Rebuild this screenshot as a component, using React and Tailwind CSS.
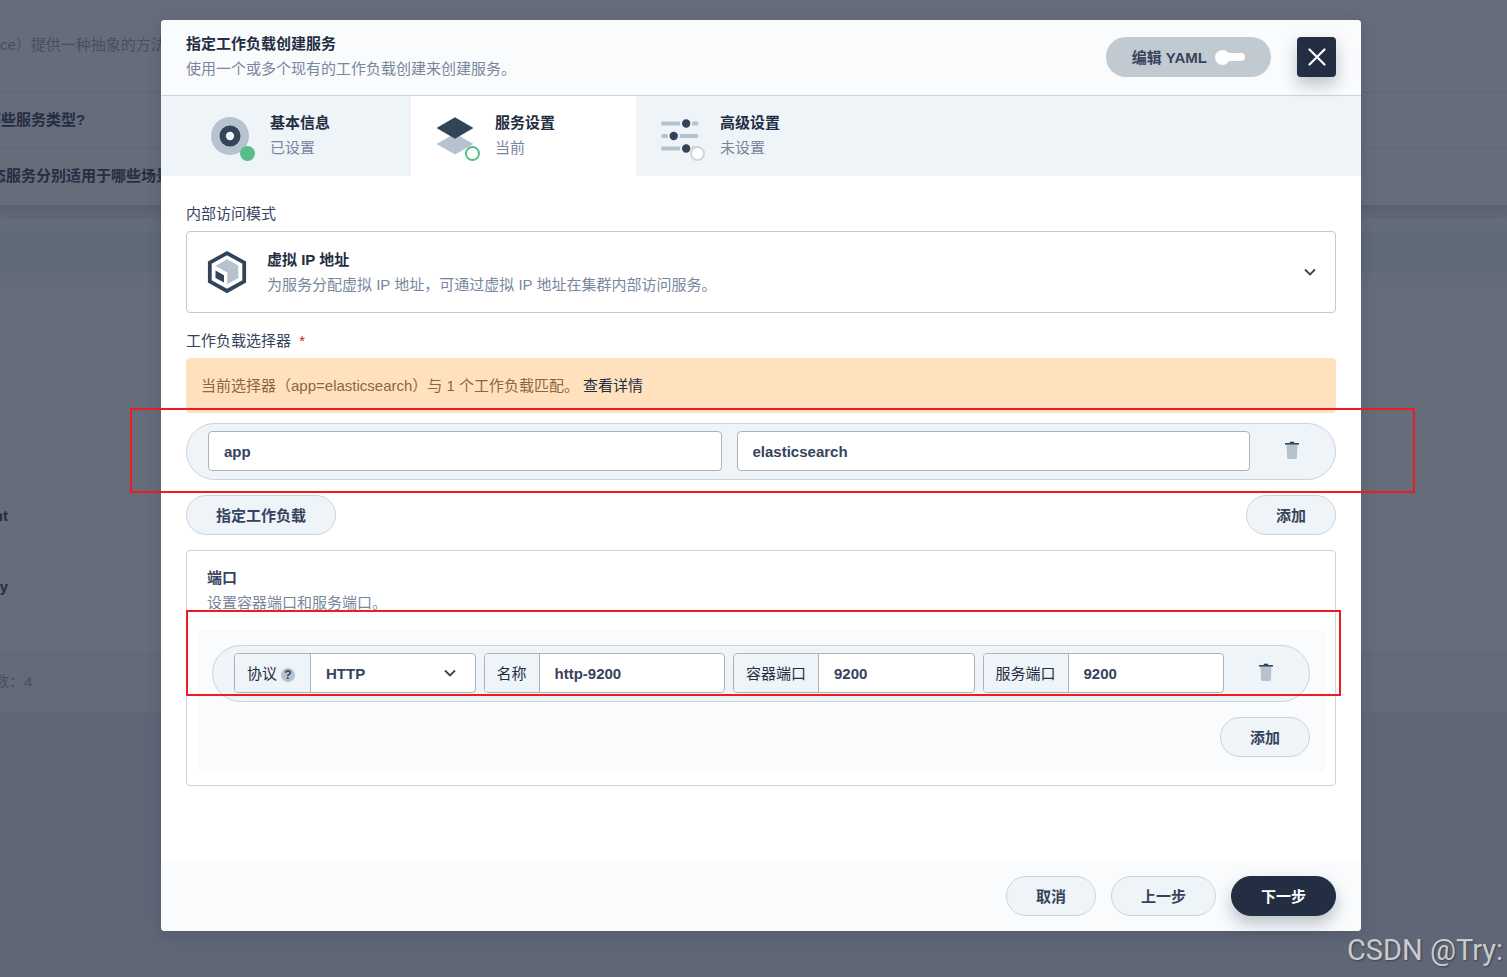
import React, { useState } from "react";

const steps = [
  { id: "basic", title: "基本信息", desc: "已设置", status: "done" },
  { id: "service", title: "服务设置", desc: "当前", status: "current" },
  { id: "advanced", title: "高级设置", desc: "未设置", status: "todo" },
];

const tableRows = ["", "", "", "nt", "y", ""];

const statusClasses = {
  done: "bg-[#55bc8a]",
  current: "bg-white border-2 border-[#55bc8a]",
  todo: "bg-white border-2 border-[#ccd3db]",
};

const StepIcon = ({ id }) => (
  <svg viewBox="0 0 50 50" className="size-[50px]" aria-hidden="true">
    {id === "basic" && (
      <>
        <circle cx="25" cy="25" r="19" fill="#b6c2cd" />
        <circle cx="25" cy="25" r="10.5" fill="#324558" />
        <circle cx="25" cy="25" r="4.2" fill="#eff4f9" />
      </>
    )}
    {id === "service" && (
      <>
        <path d="M25 22.5 43.5 33 25 43.5 6.5 33z" fill="#b6c2cd" />
        <path d="M25 6.3 43.5 17 25 27.7 6.5 17z" fill="#324558" />
      </>
    )}
    {id === "advanced" && (
      <>
        <path
          d="M8 12.5h33.5M8 25h33.5M8 37.5h33.5"
          stroke="#b6c2cd"
          strokeWidth="4"
          strokeLinecap="round"
        />
        <g fill="#324558" stroke="#eff4f9" strokeWidth="2">
          <circle cx="31.2" cy="12.5" r="5.2" />
          <circle cx="18.7" cy="25" r="5.2" />
          <circle cx="31.2" cy="37.5" r="5.2" />
        </g>
      </>
    )}
  </svg>
);

const CubeIcon = () => (
  <svg viewBox="0 0 50 50" className="size-[50px] shrink-0" aria-hidden="true">
    <path
      d="M25 6.2 42.2 15.7V34.5L25 44 7.8 34.5V15.7z"
      fill="none"
      stroke="#324558"
      strokeWidth="3.8"
    />
    <path d="M25 12.3 36.3 18.5V31L25.3 37.3V25.5L13.5 19z" fill="#b6c2cd" />
    <path d="M13.5 23.5 22 28.2V35.5L13.5 31z" fill="#324558" />
  </svg>
);

const Chevron = () => (
  <svg viewBox="0 0 20 20" className="size-5 shrink-0" aria-hidden="true">
    <path d="M5 7.5 10 12.5 15 7.5" fill="none" stroke="#324558" strokeWidth="1.8" />
  </svg>
);

const TrashButton = () => (
  <div className="flex w-[85px] shrink-0 justify-center">
    <button type="button" aria-label="删除" className="p-1">
      <svg viewBox="0 0 20 20" className="size-5" aria-hidden="true">
        <path d="M3.5 3.500h11l-.6 13.200a1.500 1.500 0 0 1-1.500 1.300H5.600a1.500 1.500 0 0 1-1.500-1.300z" fill="#b6c2cd" />
        <path d="M2 2.800h14" stroke="#324558" strokeWidth="1.600" />
        <path d="M6.800 1.400h4.400" stroke="#324558" strokeWidth="1.400" />
      </svg>
    </button>
  </div>
);

const Button = ({ children, dark }) => (
  <button
    type="button"
    className={`h-10 rounded-full border px-[29px] font-bold ${
      dark
        ? "border-[#242e42] bg-[#242e42] text-white shadow-[0_8px_16px_rgba(36,46,66,0.28)]"
        : "border-[#ccd3db] bg-[#eff4f9] text-[#36435c]"
    }`}
  >
    {children}
  </button>
);

const Field = ({ id, label, help, children }) => (
  <div className="flex h-10 min-w-0 overflow-hidden rounded border border-[#abb4be] bg-white focus-within:border-[#55bc8a]">
    <label
      htmlFor={id}
      className="flex shrink-0 items-center gap-1 border-r border-[#abb4be] bg-[#eff4f9] px-3 text-[#242e42]"
    >
      {label}
      {help && (
        <span className="mt-[3px] mr-[3px] flex size-[14px] items-center justify-center rounded-full bg-[#b6c2cd] text-xs font-bold text-[#324558]">
          ?
        </span>
      )}
    </label>
    {children}
  </div>
);

const fieldInput = "w-full min-w-0 px-[15px] font-bold text-[#36435c] outline-none";

// Service list page that sits under the mask
const PageBehind = () => (
  <div
    aria-hidden="true"
    className="min-h-screen overflow-hidden bg-[#5f6777] leading-[25px] whitespace-nowrap"
  >
    <div className="h-[205px] bg-[#666c7a] text-[#242e42] shadow-[0_4px_8px_rgba(36,46,66,0.12)]">
      <p className="h-[92px] pt-8 text-[#464f61]">ce）提供一种抽象的方法</p>
      <p className="-ml-[14px] h-14 border-t border-[#5d6776] pt-[14px] font-bold">哪些服务类型?</p>
      <p className="-ml-[9px] h-14 border-t border-[#5d6776] pt-[14px] font-bold">态服务分别适用于哪些场景</p>
    </div>
    <div className="mt-[14px] bg-[#646b79] pt-[13px]">
      <div className="h-10 bg-[#5f6978]" />
      <div className="mt-3 bg-[#666c7a]">
        {tableRows.map((name, index) => (
          <div
            key={index}
            className={`border-t border-[#5f6a78] pt-[9px] font-bold text-[#242e42] ${
              index === 0 ? "h-[67px]" : index === 5 ? "h-4" : "h-[71px]"
            }`}
          >
            <p className="flex w-2 justify-end">{name}</p>
          </div>
        ))}
      </div>
      <p className="-ml-[6px] h-[60px] bg-[#636a78] pt-[18px] text-[#464f61]">数：4</p>
    </div>
  </div>
);

const App = () => {
  const [yamlMode, setYamlMode] = useState(false);
  const [labelKey, setLabelKey] = useState("app");
  const [labelValue, setLabelValue] = useState("elasticsearch");
  const [port, setPort] = useState({
    protocol: "HTTP",
    name: "http-9200",
    containerPort: "9200",
    servicePort: "9200",
  });

  const updatePort = (key) => (e) => setPort({ ...port, [key]: e.target.value });

  return (
    <div className="relative font-['Liberation_Sans','Noto_Sans_CJK_SC',sans-serif] text-[15px]">
      <PageBehind />

      <div className="absolute inset-0 flex items-start justify-center overflow-hidden pt-5 pl-[15px]">
        <div
          role="dialog"
          aria-labelledby="dialog-title"
          className="w-full max-w-[1200px] rounded bg-white leading-[25px] text-[#36435c] shadow-[0_4px_16px_rgba(36,46,66,0.2)]"
        >
          {/* Header */}
          <header className="flex items-center rounded-t border-b border-[#ccd3db] bg-[#f9fbfd] px-[25px] pt-[11px] pb-6">
            <div className="flex-1 self-start">
              <h1 id="dialog-title" className="h-[25px] font-bold text-[#242e42]">
                指定工作负载创建服务
              </h1>
              <p className="h-[15px] text-[#79879c]">使用一个或多个现有的工作负载创建来创建服务。</p>
            </div>
            <button
              type="button"
              role="switch"
              aria-checked={yamlMode}
              onClick={() => setYamlMode(!yamlMode)}
              className="mt-[6px] -mb-[6px] flex h-10 items-center gap-2 rounded-full bg-[#c1c9d1] px-[26px] font-bold"
            >
              编辑 YAML
              <span className={`flex h-[15px] w-[30px] items-center ${yamlMode ? "flex-row-reverse" : ""}`}>
                <span className="z-10 size-[15px] rounded-full bg-white" />
                <span className={`h-2 flex-1 bg-white ${yamlMode ? "-mr-1 rounded-l-full" : "-ml-1 rounded-r-full"}`} />
              </span>
            </button>
            <button
              type="button"
              aria-label="关闭"
              className="mt-[6px] -mb-[6px] ml-[26px] flex h-10 w-[39px] items-center justify-center rounded bg-[#242e42] shadow-[0_8px_16px_rgba(36,46,66,0.28)]"
            >
              <svg viewBox="0 0 20 20" className="size-5" aria-hidden="true">
                <path d="M2.500 2.500l15 15M17.500 2.500l-15 15" stroke="#fff" strokeWidth="2.200" strokeLinecap="round" />
              </svg>
            </button>
          </header>

          {/* Steps */}
          <ol className="flex bg-[#eff4f9] pl-[25px]">
            {steps.map((step) => (
              <li
                key={step.id}
                className={`flex h-20 w-[225px] items-center gap-[15px] pl-[19px] ${
                  step.status === "current" ? "bg-white" : ""
                }`}
              >
                <div className="relative">
                  <StepIcon id={step.id} />
                  <span
                    className={`absolute right-0 bottom-0 size-[15px] rounded-full ${statusClasses[step.status]}`}
                  />
                </div>
                <div className="pb-[2px]">
                  <p className="font-bold text-[#242e42]">{step.title}</p>
                  <p className="text-[#79879c]">{step.desc}</p>
                </div>
              </li>
            ))}
          </ol>

          <div className="px-[25px] pt-[25px] pb-[75px]">
            {/* Access mode */}
            <p id="access-mode">内部访问模式</p>
            <button
              type="button"
              aria-labelledby="access-mode"
              className="mt-[5px] flex w-full items-center gap-[15px] rounded border border-[#c1c9d1] bg-white p-[15px] text-left"
            >
              <CubeIcon />
              <span className="flex-1">
                <span className="block font-bold text-[#242e42]">虚拟 IP 地址</span>
                <span className="block text-[#79879c]">
                  为服务分配虚拟 IP 地址，可通过虚拟 IP 地址在集群内部访问服务。
                </span>
              </span>
              <Chevron />
            </button>

            {/* Workload selector */}
            <p className="mt-[15px]">
              工作负载选择器 <span className="ml-1 text-[#ca2621]">*</span>
            </p>
            <div className="mt-[5px] rounded bg-[#ffe1be] p-[15px] text-[#8d663e]">
              当前选择器（app=elasticsearch）与 1 个工作负载匹配。
              <a href="#workloads" className="ml-1 text-[#242e42]">
                查看详情
              </a>
            </div>
            <div className="relative mt-[10px]">
              <div className="flex items-center rounded-full border border-[#ccd3db] bg-[#eff4f9] pt-[7px] pb-2 pl-[21px]">
                <div className="grid flex-1 grid-cols-2 gap-[15px]">
                  <input
                    aria-label="键"
                    value={labelKey}
                    onChange={(e) => setLabelKey(e.target.value)}
                    className="h-10 min-w-0 rounded border border-[#abb4be] bg-white px-[15px] font-bold outline-none"
                  />
                  <input
                    aria-label="值"
                    value={labelValue}
                    onChange={(e) => setLabelValue(e.target.value)}
                    className="h-10 min-w-0 rounded border border-[#abb4be] bg-white px-[15px] font-bold outline-none"
                  />
                </div>
                <TrashButton />
              </div>
              <div className="pointer-events-none absolute -top-[15px] -right-[79px] -bottom-[13px] -left-14 border-2 border-[#ed1c24]" />
            </div>
            <div className="mt-[15px] flex justify-between">
              <Button>指定工作负载</Button>
              <Button>添加</Button>
            </div>

            {/* Ports */}
            <section className="mt-[15px] rounded border border-[#ccd3db] px-[10px] pt-[14px] pb-[13px]">
              <div className="px-[10px]">
                <h2 className="font-bold">端口</h2>
                <p className="text-[#79879c]">设置容器端口和服务端口。</p>
              </div>
              <div className="mt-[15px] rounded bg-[#f9fbfd] p-[15px]">
                <div className="relative">
                  <div className="flex items-center rounded-full border border-[#ccd3db] bg-[#eff4f9] pt-[7px] pb-2 pl-[21px]">
                    <div className="grid flex-1 grid-cols-4 gap-2">
                      <Field id="protocol" label="协议" help>
                        <div className="relative min-w-0 flex-1">
                          <select
                            id="protocol"
                            value={port.protocol}
                            onChange={updatePort("protocol")}
                            className={`h-full appearance-none ${fieldInput}`}
                          >
                            <option>HTTP</option>
                            <option>HTTPS</option>
                            <option>TCP</option>
                            <option>UDP</option>
                          </select>
                          <span className="pointer-events-none absolute inset-y-0 right-[15px] flex items-center">
                            <Chevron />
                          </span>
                        </div>
                      </Field>
                      <Field id="port-name" label="名称">
                        <input
                          id="port-name"
                          value={port.name}
                          onChange={updatePort("name")}
                          className={fieldInput}
                        />
                      </Field>
                      <Field id="container-port" label="容器端口">
                        <input
                          id="container-port"
                          value={port.containerPort}
                          onChange={updatePort("containerPort")}
                          className={fieldInput}
                        />
                      </Field>
                      <Field id="service-port" label="服务端口">
                        <input
                          id="service-port"
                          value={port.servicePort}
                          onChange={updatePort("servicePort")}
                          className={fieldInput}
                        />
                      </Field>
                    </div>
                    <TrashButton />
                  </div>
                  <div className="pointer-events-none absolute -top-[35px] -right-[31px] bottom-[6px] -left-[26px] border-2 border-[#ed1c24]" />
                </div>
                <div className="mt-[15px] flex justify-end">
                  <Button>添加</Button>
                </div>
              </div>
            </section>
          </div>

          {/* Footer */}
          <footer className="flex justify-end gap-[15px] rounded-b bg-[#f9fbfd] px-[25px] py-[15px]">
            <Button>取消</Button>
            <Button>上一步</Button>
            <Button dark>下一步</Button>
          </footer>
        </div>
      </div>

      <p className="absolute right-1 bottom-1 font-[Roboto,sans-serif] text-[29px] leading-[46px] text-[#c9cbcf] [text-shadow:1px_1px_2px_rgba(0,0,0,0.4)]">
        CSDN @Try:
      </p>
    </div>
  );
};

export default App;
